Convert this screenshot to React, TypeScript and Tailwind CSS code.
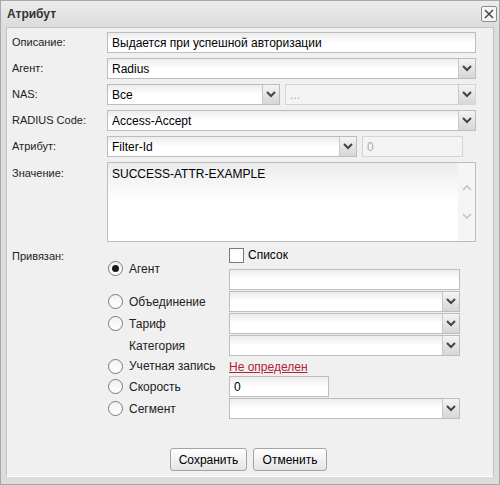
import React from "react";

const font = { fontFamily: '"Liberation Sans", Arial, sans-serif' };

const Chevron = ({ up, light }: { up?: boolean; light?: boolean }) => (
  <svg width="10" height="7" viewBox="0 0 10 7">
    <polyline
      points={up ? "1,6 5,2 9,6" : "1,1 5,5 9,1"}
      fill="none"
      stroke={light ? "#c4c4c4" : "#444"}
      strokeWidth={light ? 1.6 : 2}
    />
  </svg>
);

const Field = ({ value, disabled, className }: { value?: string; disabled?: boolean; className?: string }) => (
  <div
    className={`h-[21px] border flex items-center px-[4px] text-[12px] ${
      disabled
        ? "border-[#d4d4d4] bg-[#f3f3f3] text-[#aaaaaa]"
        : "border-[#bdbdbd] bg-gradient-to-b from-[#ececec] via-white to-white text-black"
    } ${className ?? ""}`}
  >
    {value}
  </div>
);

const Select = ({ value, disabled, className }: { value?: string; disabled?: boolean; className?: string }) => (
  <div
    className={`h-[21px] border flex ${
      disabled ? "border-[#d4d4d4] bg-[#f3f3f3] text-[#aaaaaa]" : "border-[#bdbdbd] bg-gradient-to-b from-[#ececec] via-white to-white text-black"
    } ${className ?? ""}`}
  >
    <div className="flex-1 flex items-center px-[4px] text-[12px] overflow-hidden whitespace-nowrap">{value}</div>
    <div className="w-[17px] flex items-center justify-center border-l border-[#c8c8c8] bg-gradient-to-b from-[#f4f4f4] to-[#d6d6d6]">
      <Chevron />
    </div>
  </div>
);

const Radio = ({ checked }: { checked?: boolean }) => (
  <div className="w-[15px] h-[15px] rounded-full border border-[#7a7a7a] bg-gradient-to-b from-[#f2f2f2] to-white flex items-center justify-center">
    {checked && <div className="w-[7px] h-[7px] rounded-full bg-[#1a1a1a]" />}
  </div>
);

const Label = ({ children }: { children: React.ReactNode }) => (
  <div className="text-[11px] text-[#222] pl-[5px] h-[21px] flex items-center">{children}</div>
);

const BindRow = ({ checked, label, children, radio = true }: { checked?: boolean; label: string; children?: React.ReactNode; radio?: boolean }) => (
  <div className="flex items-center">
    <div className="w-[22px] flex pl-[1px]">{radio && <Radio checked={checked} />}</div>
    <div className="w-[100px] text-[12px] text-[#222]">{label}</div>
    <div className="flex-1">{children}</div>
  </div>
);

export default function App() {
  return (
    <div style={font} className="w-[500px] h-[485px] bg-[#dcdcdc] border border-[#a8a8a8] flex flex-col">
      <div className="h-[26px] flex items-center justify-between pl-[6px] pr-[2px] bg-gradient-to-b from-[#ececec] to-[#dcdcdc]">
        <span className="text-[12px] font-bold text-[#333]">Атрибут</span>
        <div className="w-[16px] h-[16px] border border-[#8c8c8c] rounded-[2px] bg-[#f6f6f6] flex items-center justify-center">
          <svg width="10" height="10" viewBox="0 0 10 10">
            <path d="M1 1L9 9M9 1L1 9" stroke="#444" strokeWidth="1.5" />
          </svg>
        </div>
      </div>
      <div className="mx-[5px] h-[450px] bg-[#f0f0f0] border border-[#c4c4c4] border-b-white flex flex-col pt-[4px] pr-[17px]">
        <div className="grid grid-cols-[100px_1fr] gap-y-[5px]">
          <Label>Описание:</Label>
          <Field value="Выдается при успешной авторизации" />
          <Label>Агент:</Label>
          <Select value="Radius" />
          <Label>NAS:</Label>
          <div className="flex gap-[5px]">
            <Select value="Все" className="w-[173px]" />
            <Select value="..." disabled className="flex-1" />
          </div>
          <Label>RADIUS Code:</Label>
          <Select value="Access-Accept" />
          <Label>Атрибут:</Label>
          <div className="flex gap-[5px]">
            <Select value="Filter-Id" className="w-[250px]" />
            <Field value="0" disabled className="w-[101px]" />
          </div>
          <div className="text-[11px] text-[#222] pl-[5px] pt-[3px]">Значение:</div>
          <div className="h-[80px] border border-[#bdbdbd] bg-gradient-to-b from-[#ececec] via-white to-white flex">
            <div className="flex-1 px-[4px] pt-[2px] text-[12px] text-black">SUCCESS-ATTR-EXAMPLE</div>
            <div className="w-[17px] bg-[#f5f5f5] flex flex-col items-center justify-around py-[10px]">
              <Chevron up light />
              <Chevron light />
            </div>
          </div>
        </div>
        <div className="flex mt-[5px]">
          <div className="w-[100px] text-[11px] text-[#222] pl-[5px] pt-[1px]">Привязан:</div>
          <div className="flex-1 flex flex-col pr-[16px]">
            <BindRow checked label="Агент">
              <div className="flex flex-col gap-[6px]">
                <div className="flex items-center gap-[4px] h-[16px]">
                  <div className="w-[15px] h-[15px] border border-[#7a7a7a] bg-white" />
                  <span className="text-[12px] text-black">Список</span>
                </div>
                <Field />
              </div>
            </BindRow>
            <div className="h-[1px]" />
            <BindRow label="Объединение"><Select /></BindRow>
            <div className="h-[1px]" />
            <BindRow label="Тариф"><Select /></BindRow>
            <div className="h-[1px]" />
            <BindRow label="Категория" radio={false}><Select /></BindRow>
            <div className="h-[20px] flex items-center">
              <BindRow label="Учетная запись">
                <span className="text-[12px] text-[#b0213a] underline">Не определен</span>
              </BindRow>
            </div>
            <BindRow label="Скорость"><Field value="0" className="w-[100px]" /></BindRow>
            <div className="h-[1px]" />
            <BindRow label="Сегмент"><Select /></BindRow>
          </div>
        </div>
        <div className="flex-1 flex items-end justify-center gap-[6px] pb-[5px] pl-[14px]">
          <button className="h-[23px] w-[77px] border border-[#a4a4a4] rounded-[3px] bg-gradient-to-b from-white to-[#e4e4e4] text-[12px] text-black">Сохранить</button>
          <button className="h-[23px] w-[74px] border border-[#a4a4a4] rounded-[3px] bg-gradient-to-b from-white to-[#e4e4e4] text-[12px] text-black">Отменить</button>
        </div>
      </div>
    </div>
  );
}
